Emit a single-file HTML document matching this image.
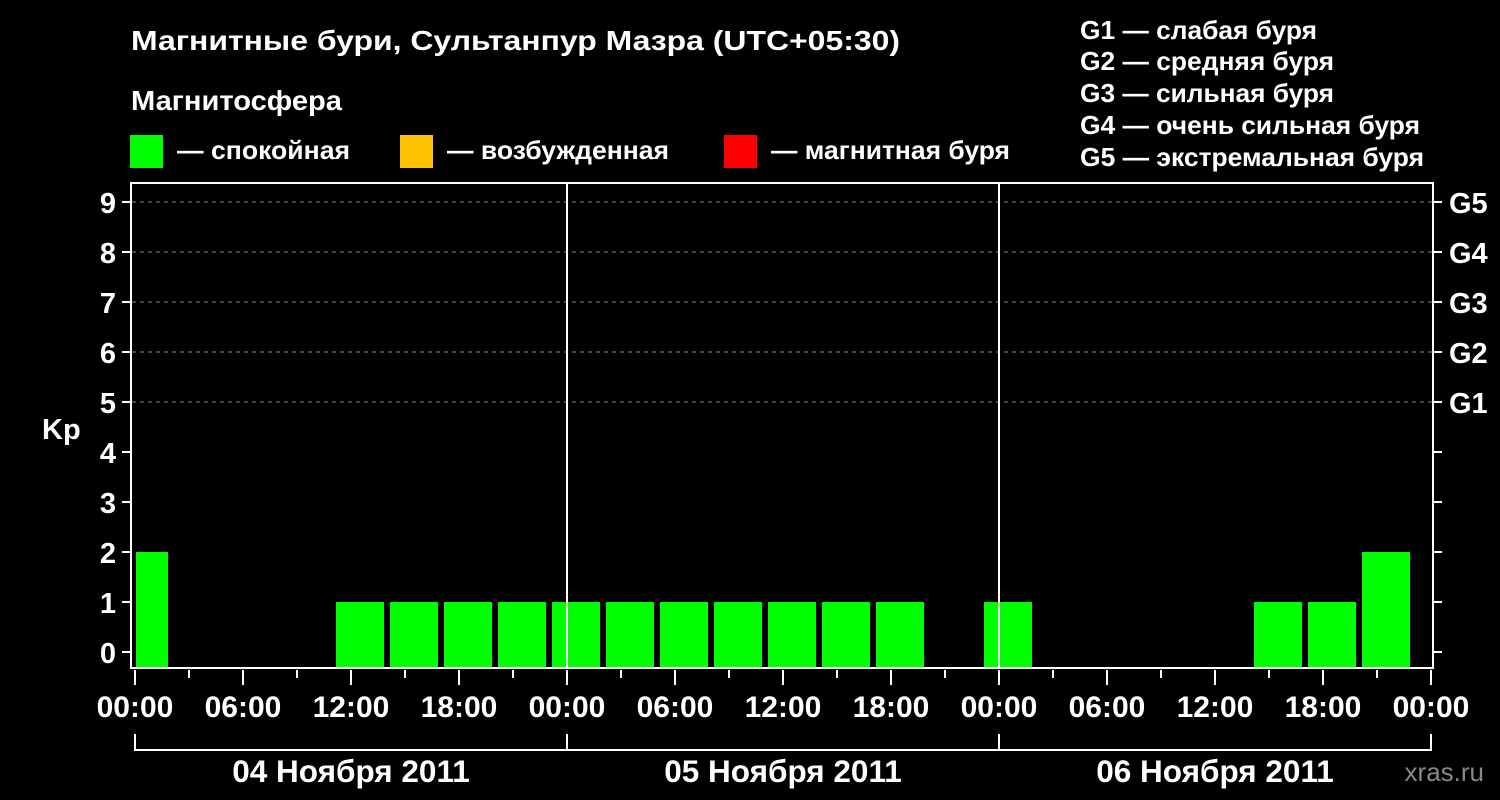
<!DOCTYPE html>
<html><head><meta charset="utf-8"><style>html,body{margin:0;padding:0;background:#000;}svg{display:block}</style></head>
<body>
<svg width="1500" height="800" xmlns="http://www.w3.org/2000/svg" font-family="Liberation Sans, Arial, sans-serif" font-weight="bold" fill="#fff">
<rect width="1500" height="800" fill="#000"/>
<text x="131" y="50" font-size="28" textLength="769" lengthAdjust="spacingAndGlyphs">Магнитные бури, Сультанпур Мазра (UTC+05:30)</text>
<text x="131" y="110" font-size="28" textLength="211" lengthAdjust="spacingAndGlyphs">Магнитосфера</text>
<rect x="130" y="135" width="33" height="33" fill="#00ff00"/>
<text x="177" y="159" font-size="26" textLength="173" lengthAdjust="spacingAndGlyphs">— спокойная</text>
<rect x="400" y="135" width="33" height="33" fill="#ffc000"/>
<text x="447" y="159" font-size="26" textLength="222" lengthAdjust="spacingAndGlyphs">— возбужденная</text>
<rect x="724" y="135" width="33" height="33" fill="#ff0000"/>
<text x="771" y="159" font-size="26" textLength="239" lengthAdjust="spacingAndGlyphs">— магнитная буря</text>
<g font-size="26">
<text x="1080" y="39" textLength="237" lengthAdjust="spacingAndGlyphs">G1 — слабая буря</text>
<text x="1080" y="70" textLength="254" lengthAdjust="spacingAndGlyphs">G2 — средняя буря</text>
<text x="1080" y="102" textLength="254" lengthAdjust="spacingAndGlyphs">G3 — сильная буря</text>
<text x="1080" y="134" textLength="340" lengthAdjust="spacingAndGlyphs">G4 — очень сильная буря</text>
<text x="1080" y="166" textLength="344" lengthAdjust="spacingAndGlyphs">G5 — экстремальная буря</text>
</g>
<g stroke="#888" stroke-width="1" stroke-dasharray="4,4">
<line x1="132" y1="202" x2="1432" y2="202"/><line x1="132" y1="252" x2="1432" y2="252"/><line x1="132" y1="302" x2="1432" y2="302"/><line x1="132" y1="352" x2="1432" y2="352"/><line x1="132" y1="402" x2="1432" y2="402"/>
</g>
<g fill="#00ff00">
<rect x="136" y="552" width="32" height="116"/>
<rect x="336" y="602" width="48" height="66"/><rect x="390" y="602" width="48" height="66"/><rect x="444" y="602" width="48" height="66"/><rect x="498" y="602" width="48" height="66"/><rect x="552" y="602" width="48" height="66"/><rect x="606" y="602" width="48" height="66"/><rect x="660" y="602" width="48" height="66"/><rect x="714" y="602" width="48" height="66"/><rect x="768" y="602" width="48" height="66"/><rect x="822" y="602" width="48" height="66"/><rect x="876" y="602" width="48" height="66"/><rect x="984" y="602" width="48" height="66"/><rect x="1254" y="602" width="48" height="66"/><rect x="1308" y="602" width="48" height="66"/>
<rect x="1362" y="552" width="48" height="116"/>
</g>
<g stroke="#fff" stroke-width="2" fill="none">
<rect x="131" y="183" width="1302" height="485"/>
<line x1="567" y1="183" x2="567" y2="668"/><line x1="999" y1="183" x2="999" y2="668"/>
<path d="M122 652h9M122 602h9M122 552h9M122 502h9M122 452h9M122 402h9M122 352h9M122 302h9M122 252h9M122 202h9"/>
<path d="M1433 652h9M1433 602h9M1433 552h9M1433 502h9M1433 452h9M1433 402h9M1433 352h9M1433 302h9M1433 252h9M1433 202h9"/>
<path d="M135 670v15M243 670v15M351 670v15M459 670v15M567 670v15M675 670v15M783 670v15M891 670v15M999 670v15M1107 670v15M1215 670v15M1323 670v15M1431 670v15"/>
<path d="M189 670v8M297 670v8M405 670v8M513 670v8M621 670v8M729 670v8M837 670v8M945 670v8M1053 670v8M1161 670v8M1269 670v8M1377 670v8"/>
<path d="M135 734v16h1296v-16M567 734v16M999 734v16"/>
</g>
<g font-size="29" text-anchor="end">
<text x="116" y="663">0</text><text x="116" y="613">1</text><text x="116" y="563">2</text><text x="116" y="513">3</text><text x="116" y="463">4</text><text x="116" y="413">5</text><text x="116" y="363">6</text><text x="116" y="313">7</text><text x="116" y="263">8</text><text x="116" y="213">9</text>
</g>
<text x="42" y="439" font-size="29">Kp</text>
<g font-size="29">
<text x="1449" y="213">G5</text><text x="1449" y="263">G4</text><text x="1449" y="313">G3</text><text x="1449" y="363">G2</text><text x="1449" y="413">G1</text>
</g>
<g font-size="30" text-anchor="middle">
<text x="135" y="717">00:00</text><text x="243" y="717">06:00</text><text x="351" y="717">12:00</text><text x="459" y="717">18:00</text><text x="567" y="717">00:00</text><text x="675" y="717">06:00</text><text x="783" y="717">12:00</text><text x="891" y="717">18:00</text><text x="999" y="717">00:00</text><text x="1107" y="717">06:00</text><text x="1215" y="717">12:00</text><text x="1323" y="717">18:00</text><text x="1431" y="717">00:00</text>
</g>
<g font-size="31.5" text-anchor="middle">
<text x="351" y="782">04 Ноября 2011</text><text x="783" y="782">05 Ноября 2011</text><text x="1215" y="782">06 Ноября 2011</text>
</g>
<text x="1484" y="781" font-size="26" fill="#888" text-anchor="end" font-weight="normal">xras.ru</text>
</svg>
</body></html>
